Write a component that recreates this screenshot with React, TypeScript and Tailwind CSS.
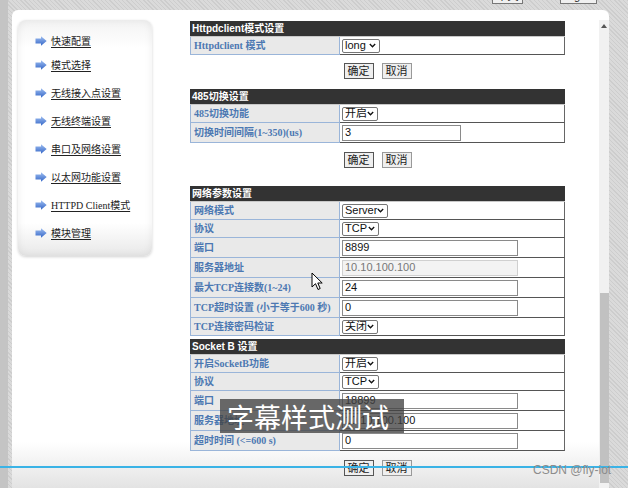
import React from "react";

type Field =
  | { label: string; kind: "select"; value: string; w: string }
  | { label: string; kind: "input"; value: string; w: string; disabled?: boolean };

type Section = { title: string; rows: Field[] };

const menu = [
  "快速配置",
  "模式选择",
  "无线接入点设置",
  "无线终端设置",
  "串口及网络设置",
  "以太网功能设置",
  "HTTPD Client模式",
  "模块管理",
];

const httpd: Section = {
  title: "Httpdclient模式设置",
  rows: [{ label: "Httpdclient 模式", kind: "select", value: "long", w: "w-[38px]" }],
};

const rs485: Section = {
  title: "485切换设置",
  rows: [
    { label: "485切换功能", kind: "select", value: "开启", w: "w-[36px]" },
    { label: "切换时间间隔(1~350)(us)", kind: "input", value: "3", w: "w-[119px]" },
  ],
};

const network: Section = {
  title: "网络参数设置",
  rows: [
    { label: "网络模式", kind: "select", value: "Server", w: "w-[46px]" },
    { label: "协议", kind: "select", value: "TCP", w: "w-[37px]" },
    { label: "端口", kind: "input", value: "8899", w: "w-[176px]" },
    { label: "服务器地址", kind: "input", value: "10.10.100.100", w: "w-[176px]", disabled: true },
    { label: "最大TCP连接数(1~24)", kind: "input", value: "24", w: "w-[176px]" },
    { label: "TCP超时设置 (小于等于600 秒)", kind: "input", value: "0", w: "w-[176px]" },
    { label: "TCP连接密码检证", kind: "select", value: "关闭", w: "w-[36px]" },
  ],
};

const socketB: Section = {
  title: "Socket B 设置",
  rows: [
    { label: "开启SocketB功能", kind: "select", value: "开启", w: "w-[36px]" },
    { label: "协议", kind: "select", value: "TCP", w: "w-[37px]" },
    { label: "端口", kind: "input", value: "18899", w: "w-[176px]" },
    { label: "服务器地址", kind: "input", value: "10.10.100.100", w: "w-[176px]" },
    { label: "超时时间 (<=600 s)", kind: "input", value: "0", w: "w-[176px]" },
  ],
};

function MenuArrow() {
  return (
    <svg width="12" height="10" viewBox="0 0 12 10" className="shrink-0">
      <defs>
        <linearGradient id="menuArrow" x1="0" y1="0" x2="0" y2="1">
          <stop offset="0" stopColor="#9dbdf0" />
          <stop offset="1" stopColor="#3567c8" />
        </linearGradient>
      </defs>
      <path d="M0.5 2.5 H6 V0.3 L11.7 5 L6 9.7 V7.5 H0.5 Z" fill="url(#menuArrow)" />
    </svg>
  );
}

function Chevron() {
  return (
    <svg width="7" height="5" viewBox="0 0 7 5" className="shrink-0">
      <path d="M0.8 1 L3.5 3.8 L6.2 1" fill="none" stroke="#111" strokeWidth="1.3" />
    </svg>
  );
}

function FieldRow({ field, first }: { field: Field; first: boolean }) {
  const h = field.kind === "select" ? "h-[18px]" : "h-[20px]";
  return (
    <div className={`flex ${h} ${first ? "border-t border-t-[#c8c8c8]" : ""} box-content`}>
      <div className="w-[150px] shrink-0 flex items-center pl-[3px] bg-[#e9e9e9] border-l border-r border-b border-[#9ab5d9] text-[10px] font-bold text-[#4c78b2] font-['Liberation_Serif','Noto_Sans_CJK_SC',serif] whitespace-nowrap">
        {field.label}
      </div>
      <div className="flex-1 flex items-center pl-[2px] bg-white border-r border-b border-r-[#666] border-b-[#555]">
        {field.kind === "select" ? (
          <div className={`${field.w} h-[14px] flex items-center justify-between pl-[2px] pr-[3px] border border-[#767676] rounded-[2px] bg-white text-[11px] leading-none text-[#111] whitespace-nowrap overflow-hidden`}>
            <span className="whitespace-nowrap">{field.value}</span>
            <Chevron />
          </div>
        ) : (
          <div
            className={`${field.w} h-[16px] flex items-center pl-[2px] border text-[11px] leading-none whitespace-nowrap ${
              field.disabled ? "bg-[#f3f3f3] text-[#777] border-[#d0d0d0]" : "bg-white text-[#111] border-[#8a8a8a]"
            }`}
          >
            {field.value}
          </div>
        )}
      </div>
    </div>
  );
}

function Block({ section }: { section: Section }) {
  return (
    <div className="w-[375px]">
      <div className="h-[15px] bg-[#333] flex items-center pl-[2px] text-[10px] font-bold text-white whitespace-nowrap">
        {section.title}
      </div>
      {section.rows.map((r, i) => (
        <FieldRow key={r.label + i} field={r} first={i === 0} />
      ))}
    </div>
  );
}

function Buttons({ className }: { className: string }) {
  return (
    <div className={`w-[375px] flex justify-center gap-[8px] ${className}`}>
      <div className="w-[30px] h-[16px] flex items-center justify-center border border-[#555] bg-[#efefef] text-[11px] text-[#222]">
        确定
      </div>
      <div className="w-[30px] h-[16px] flex items-center justify-center border border-[#999] bg-[#efefef] text-[11px] text-[#222]">
        取消
      </div>
    </div>
  );
}

export default function App() {
  return (
    <div className="relative w-[628px] h-[488px] overflow-hidden flex font-['Liberation_Sans','Noto_Sans_CJK_SC',sans-serif] bg-[repeating-linear-gradient(45deg,#dadada_0px,#dadada_2px,#cdcdcd_2px,#cdcdcd_3px)]">
      {/* left strip */}
      <div className="w-[8px] shrink-0 bg-[#c4c4c4]" />

      <div className="flex-1 flex flex-col">
        {/* top bar with language buttons */}
        <div className="h-[10px] shrink-0 flex justify-end gap-[37px] pr-[31px]">
          <div className="-mt-[12px] w-[31px] h-[16px] flex items-end justify-center border border-[#777] bg-[#f0f0f0] text-[11px] leading-[13px] text-[#222]">
            中文
          </div>
          <div className="-mt-[12px] w-[37px] h-[16px] flex items-end justify-center border border-[#777] bg-[#f0f0f0] text-[11px] leading-[13px] text-[#222]">
            English
          </div>
        </div>

        <div className="flex-1 flex min-h-0">
          <div className="w-[4px] shrink-0" />
          {/* white panel */}
          <div className="w-[597px] shrink-0 flex pl-[6px] pt-[10px] rounded-t-[6px] bg-[linear-gradient(to_bottom,#ffffff_0px,#ffffff_432px,#e3e3e3_478px)]">
            {/* sidebar */}
            <div className="w-[134px] h-[236px] shrink-0 rounded-[8px] bg-[linear-gradient(to_bottom,#f3f3f3,#ffffff_12%,#ffffff_86%,#e8e8e8)] shadow-[inset_0_0_8px_rgba(0,0,0,0.07),0_1px_3px_rgba(0,0,0,0.18)] pt-[14px] pl-[17px] flex flex-col">
              {menu.map((m, i) => (
                <div key={m} className={`h-[14px] flex items-center gap-[4px] ${i === 0 ? "mb-[10px]" : "mb-[14px]"}`}>
                  <MenuArrow />
                  <span className="text-[10px] text-[#222] underline underline-offset-2 whitespace-nowrap font-['Liberation_Serif','Noto_Sans_CJK_SC',serif]">
                    {m}
                  </span>
                </div>
              ))}
            </div>

            {/* main frame */}
            <div className="flex-1 flex min-w-0">
              <div className="flex-1 pl-[38px] pt-[1px] overflow-hidden">
                <Block section={httpd} />
                <Buttons className="mt-[8px]" />
                <div className="h-[10px]" />
                <Block section={rs485} />
                <Buttons className="mt-[9px]" />
                <div className="h-[18px]" />
                <Block section={network} />
                <div className="h-[3px]" />
                <Block section={socketB} />
                <Buttons className="mt-[9px]" />
              </div>
              {/* scrollbar */}
              <div className="w-[10px] shrink-0 bg-[#f1f1f1] flex flex-col items-center">
                <svg width="6" height="4" viewBox="0 0 6 4" className="mt-[4px]">
                  <path d="M0 4 L3 0 L6 4 Z" fill="#555" />
                </svg>
                <div className="mt-[265px] w-[9px] h-[190px] bg-[#c1c1c1]" />
              </div>
            </div>
          </div>
          <div className="flex-1" />
        </div>
      </div>

      {/* video overlays */}
      <svg width="13" height="19" viewBox="0 0 13 19" className="absolute left-[311px] top-[272px]">
        <path d="M1 1 L1 15 L4.5 11.7 L7 17.5 L9.2 16.5 L6.8 11 L11.2 11 Z" fill="#fff" stroke="#000" strokeWidth="1" strokeLinejoin="round" />
      </svg>

      <div className="absolute left-[220px] top-[399px] w-[184px] h-[34px] bg-[rgba(66,66,66,0.78)] flex items-center pl-[7px] text-[27px] leading-none text-white font-['Noto_Sans_CJK_SC',sans-serif]">
        字幕样式测试
      </div>

      <div className="absolute left-0 right-0 top-[466px] h-[2px] bg-[#3ab3e6]" />

      <div className="absolute left-[533px] top-[463px] text-[12px] leading-[14px] text-[#8c8c8c] whitespace-nowrap">
        CSDN @fly-iot
      </div>
    </div>
  );
}
